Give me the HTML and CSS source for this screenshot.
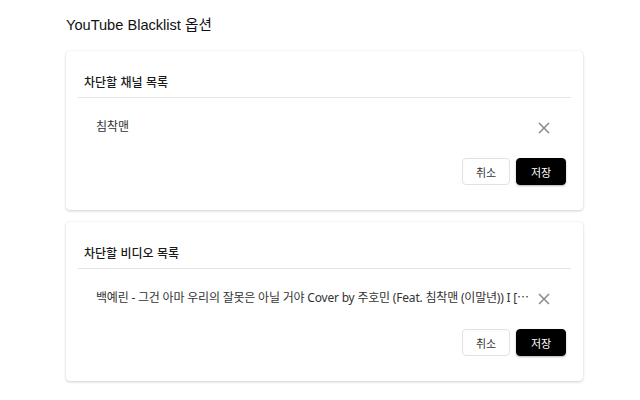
FILE: index.html
```html
<!DOCTYPE html>
<html lang="ko">
<head>
<meta charset="utf-8">
<title>YouTube Blacklist 옵션</title>
<link rel="stylesheet" href="styles.css">
</head>
<body>
<main class="page">
  <h1 class="title">YouTube Blacklist 옵션</h1>

  <section class="card">
    <h2 class="card-header">차단할 채널 목록</h2>
    <ul class="list">
      <li class="item">
        <span class="item-text">침착맨</span>
        <button class="remove" aria-label="삭제">
          <svg viewBox="0 0 12 12" width="12" height="12"><path d="M1 1 L11 11 M11 1 L1 11" stroke="#8a8a8a" stroke-width="1.5" fill="none"/></svg>
        </button>
      </li>
    </ul>
    <div class="actions">
      <button class="btn btn-cancel">취소</button>
      <button class="btn btn-save">저장</button>
    </div>
  </section>

  <section class="card">
    <h2 class="card-header">차단할 비디오 목록</h2>
    <ul class="list">
      <li class="item">
        <span class="item-text item-text-long">백예린 - 그건 아마 우리의 잘못은 아닐 거야 Cover by 주호민 (Feat. 침착맨 (이말년)) I [⋯</span>
        <button class="remove" aria-label="삭제">
          <svg viewBox="0 0 12 12" width="12" height="12"><path d="M1 1 L11 11 M11 1 L1 11" stroke="#8a8a8a" stroke-width="1.5" fill="none"/></svg>
        </button>
      </li>
    </ul>
    <div class="actions">
      <button class="btn btn-cancel">취소</button>
      <button class="btn btn-save">저장</button>
    </div>
  </section>
</main>
</body>
</html>
```

FILE: styles.css
```css
html, body {
  margin: 0;
  padding: 0;
  background: #ffffff;
}

body {
  font-family: "Noto Sans", "Noto Sans CJK KR", sans-serif;
  color: #222;
}

.page {
  width: 517px;
  padding: 15px 0 0 66px;
}

.title {
  margin: 0 0 16px;
  font-family: "Liberation Sans", "Noto Sans CJK KR", sans-serif;
  font-size: 14.6px;
  line-height: 20px;
  font-weight: 400;
  color: #111;
}

.card {
  background: #fff;
  border-radius: 4px;
  box-shadow: 0 1px 3px rgba(0, 0, 0, 0.18), 0 0 1px rgba(0, 0, 0, 0.12);
  padding: 12px;
  margin-bottom: 12px;
  height: 135px;
}

.card-header {
  margin: 0;
  padding: 11px 6px 7px;
  font-family: "Noto Sans CJK KR", sans-serif;
  font-size: 12px;
  line-height: 16px;
  font-weight: 500;
  color: #1a1a1a;
  border-bottom: 1px solid #e4e4e4;
}

.list {
  list-style: none;
  margin: 0;
  padding: 0;
}

.item {
  display: flex;
  align-items: center;
  gap: 6px;
  height: 34px;
  margin-top: 12px;
  padding: 0 21px 0 18px;
}

.item-text {
  flex: 1;
  min-width: 0;
  overflow: hidden;
  white-space: nowrap;
  font-size: 12px;
  line-height: 16px;
  color: #333;
}

.item-text-long {
  letter-spacing: -0.2px;
}

.remove {
  flex: none;
  width: 12px;
  height: 12px;
  padding: 0;
  border: none;
  background: none;
  display: flex;
  align-items: center;
  justify-content: center;
  margin-top: 1px;
}

.actions {
  display: flex;
  justify-content: flex-end;
  gap: 6px;
  margin-top: 14px;
  padding-right: 5px;
}

.btn {
  height: 27px;
  padding: 0;
  border-radius: 4px;
  font-family: "Noto Sans CJK KR", sans-serif;
  font-size: 11px;
  line-height: 16px;
  cursor: pointer;
}

.btn-cancel {
  width: 48px;
  background: #fff;
  color: #333;
  border: 1px solid #e2e2e2;
}

.btn-save {
  width: 50px;
  background: #000;
  color: #fff;
  border: 1px solid #000;
  box-shadow: 0 1px 2px rgba(0, 0, 0, 0.3);
}
```
